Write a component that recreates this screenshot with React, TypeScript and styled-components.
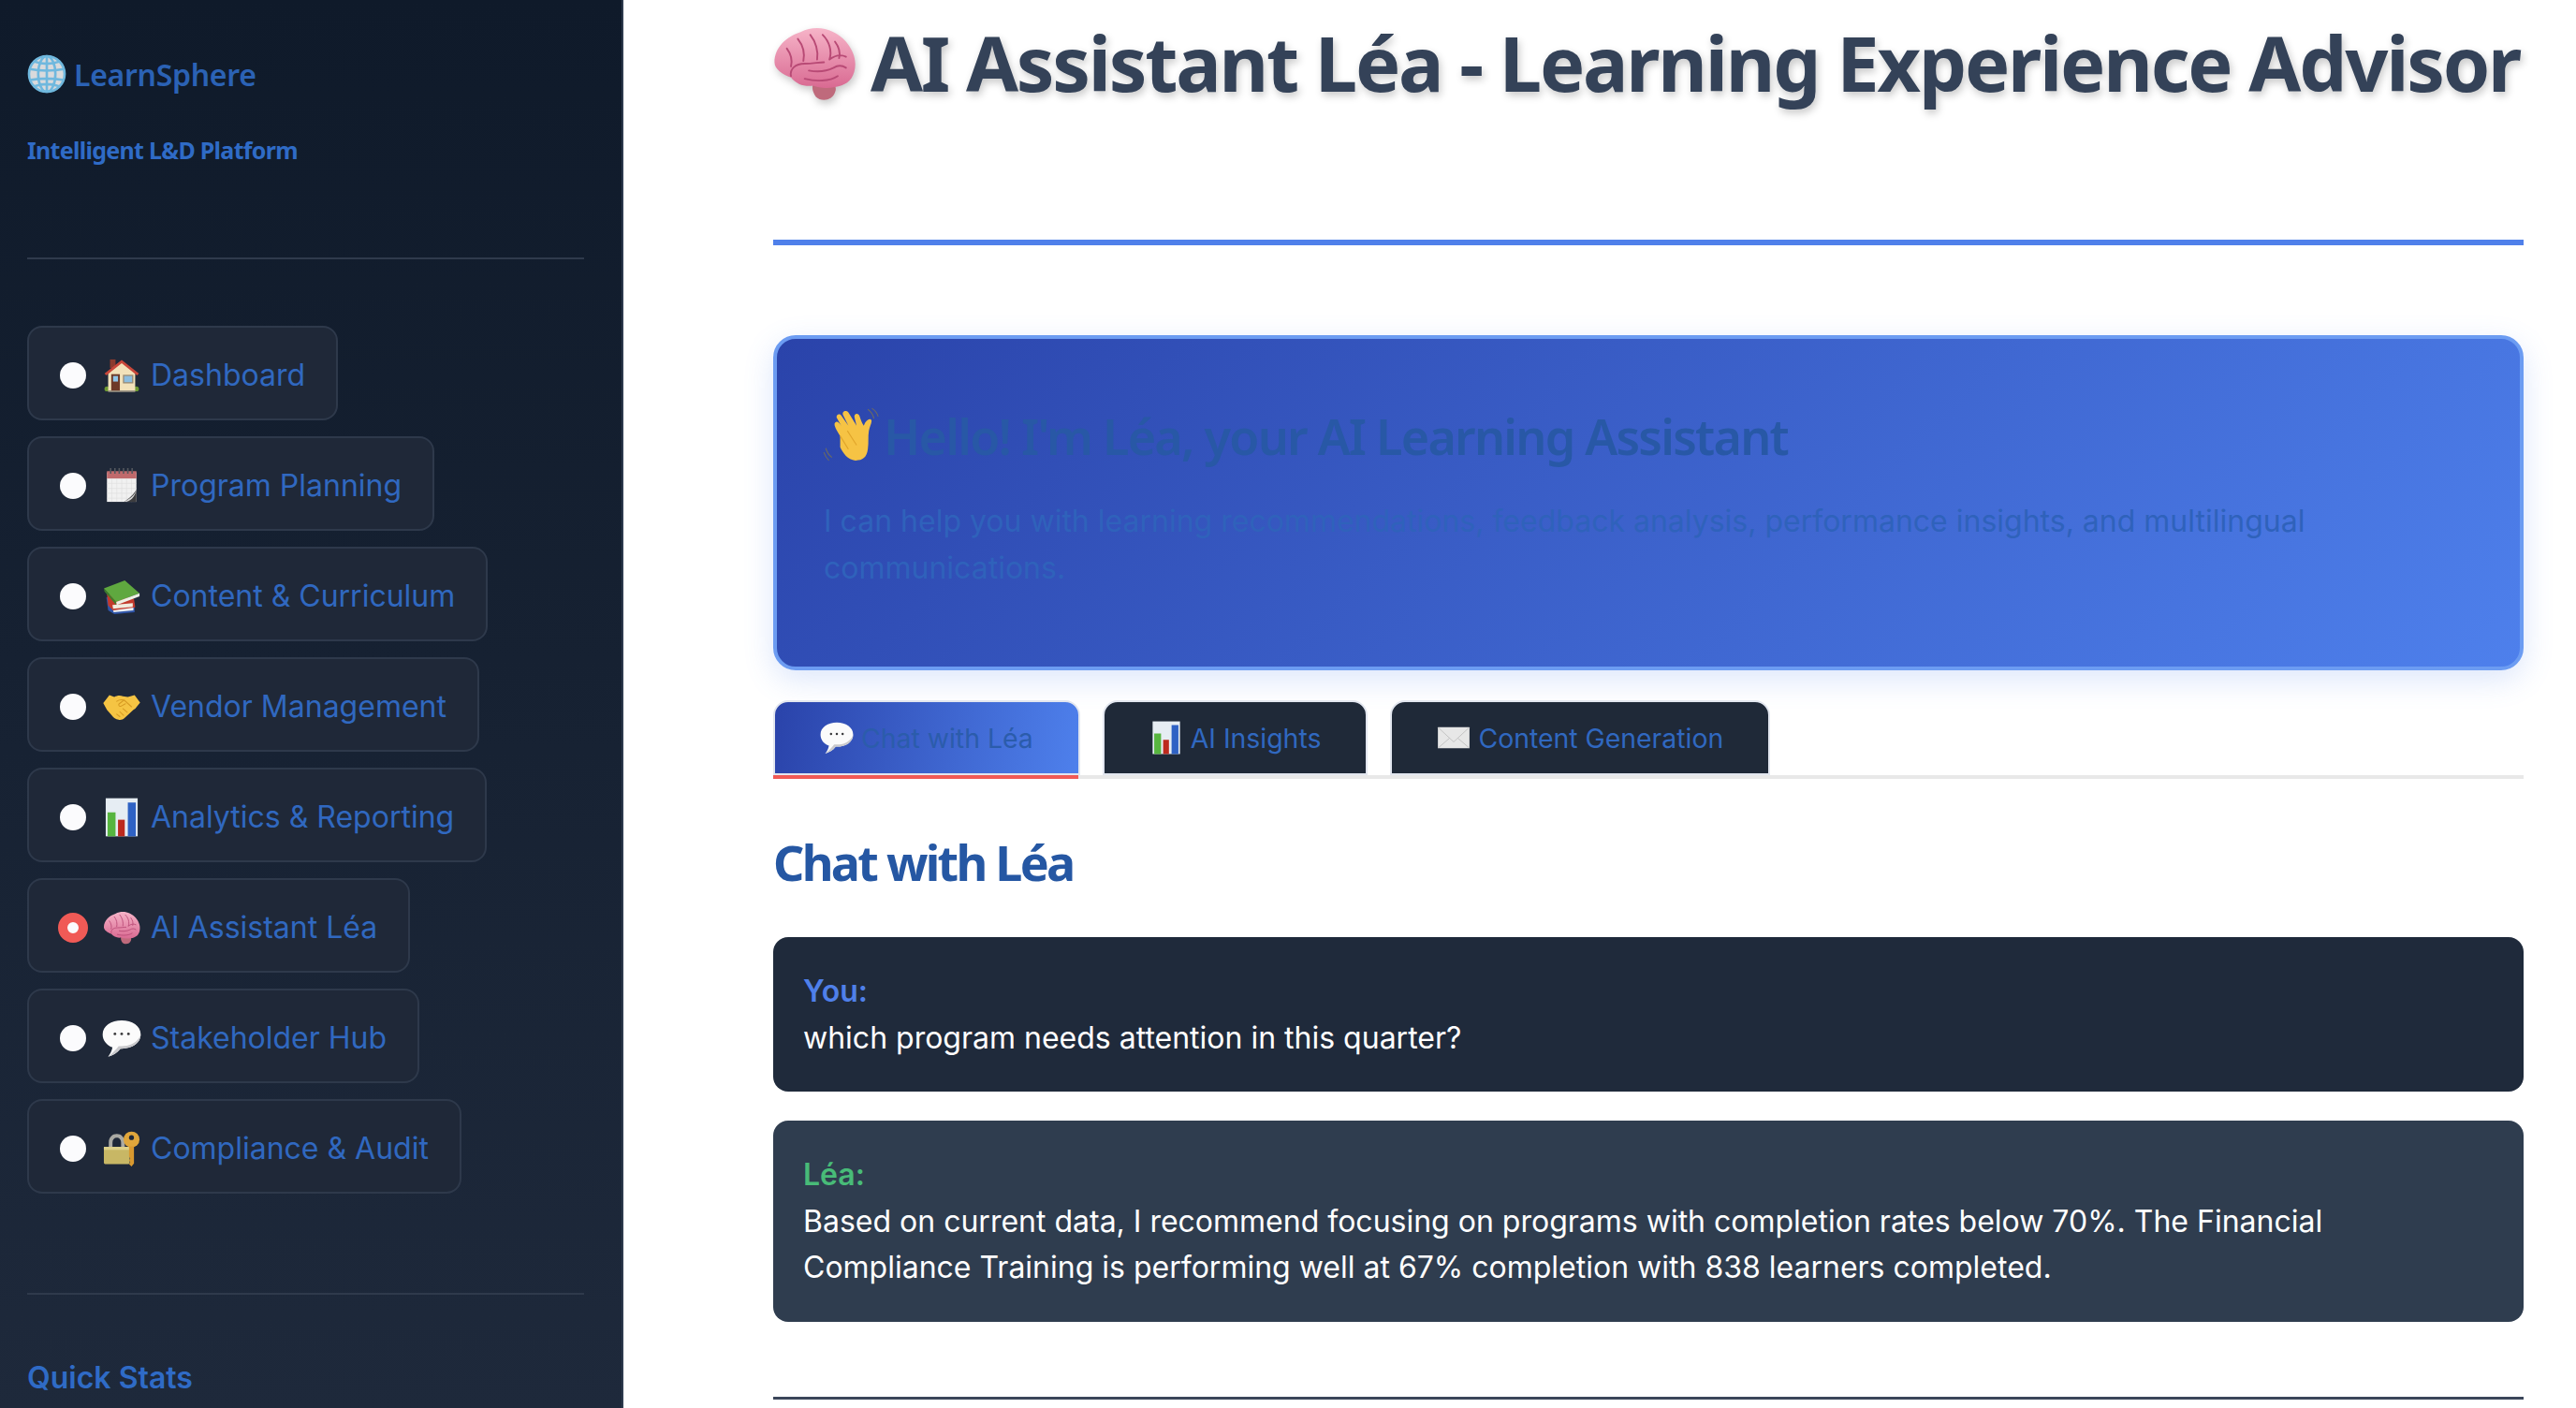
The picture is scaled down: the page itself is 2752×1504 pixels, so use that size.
import React from 'react';
import styled, { createGlobalStyle } from 'styled-components';

const GlobalStyle = createGlobalStyle`
  html, body {
    margin: 0;
    padding: 0;
    width: 2752px;
    height: 1504px;
    overflow: hidden;
    background: #ffffff;
    font-family: 'Inter', 'Liberation Sans', sans-serif;
  }
`;

const Page = styled.div`
  display: flex;
  width: 2752px;
  height: 1504px;
  overflow: hidden;
`;

const Sidebar = styled.aside`
  box-sizing: border-box;
  flex: 0 0 666px;
  height: 1504px;
  padding: 56px 40px 0 29px;
  background: linear-gradient(180deg, #0f1a2a 0%, #1e293b 100%);
  border-right: 2px solid #2d3a4d;
  overflow: hidden;
`;

const Brand = styled.div`
  display: flex;
  align-items: center;
  gap: 8px;
  height: 46px;
  font-family: 'Noto Sans', sans-serif;
  font-weight: 600;
  font-size: 32px;
  letter-spacing: -0.3px;
  color: #2b62b5;
`;

const BrandEmoji = styled.span`
  flex: none;
  display: flex;
  width: 42px;
  height: 42px;
`;

const Tagline = styled.div`
  margin-top: 40px;
  height: 36px;
  line-height: 36px;
  font-family: 'Noto Sans', sans-serif;
  font-weight: 700;
  font-size: 25px;
  letter-spacing: -0.7px;
  color: #2f6bc6;
`;

const SideRule = styled.hr<{ $top: number }>`
  margin: ${({ $top }) => $top}px 0 0;
  border: none;
  height: 2px;
  background: #2f3a4c;
`;

const Nav = styled.nav`
  display: flex;
  flex-direction: column;
  align-items: flex-start;
  gap: 17px;
  margin-top: 71px;
`;

const NavItem = styled.div`
  box-sizing: border-box;
  display: flex;
  align-items: center;
  height: 101px;
  padding: 4px 33px 0 33px;
  background: #1f2838;
  border: 2px solid #2e394b;
  border-radius: 16px;
  font-size: 32px;
  color: #3068c0;
  white-space: nowrap;
`;

const Radio = styled.span<{ $on?: boolean }>`
  box-sizing: border-box;
  flex: none;
  width: 28px;
  height: 28px;
  margin-right: 17px;
  border-radius: 50%;
  background: #fbfbfd;
  ${({ $on }) =>
    $on &&
    `
    width: 32px;
    height: 32px;
    margin: 0 15px 0 -2px;
    border: 10px solid #f05a56;
  `}
`;

const NavEmoji = styled.span`
  flex: none;
  display: flex;
  width: 42px;
  height: 42px;
  margin-right: 10px;
`;

const QuickStats = styled.div`
  margin-top: 67px;
  height: 44px;
  line-height: 44px;
  font-size: 32px;
  font-weight: 600;
  color: #2f6bc6;
`;

const Main = styled.main`
  flex: 1;
  min-width: 0;
  padding: 16px 56px 0 160px;
`;

const Title = styled.h1`
  display: flex;
  align-items: center;
  gap: 13px;
  height: 100px;
  margin: 0;
  font-family: 'Noto Sans', sans-serif;
  font-weight: 700;
  font-size: 81px;
  letter-spacing: -2.2px;
  color: #344258;
  text-shadow: 2px 4px 8px rgba(0, 0, 0, 0.22);
  white-space: nowrap;
`;

const TitleEmoji = styled.span`
  flex: none;
  display: flex;
  width: 94px;
  height: 94px;
  margin: 4px 0 0 -3px;
  filter: drop-shadow(2px 4px 4px rgba(0, 0, 0, 0.22));
`;

const TitleRule = styled.div`
  height: 6px;
  margin-top: 140px;
  background: #4f80ea;
`;

const Hero = styled.section`
  box-sizing: border-box;
  height: 358px;
  margin-top: 96px;
  padding: 73px 50px 0;
  background: linear-gradient(135deg, #2a43aa 0%, #4e80ec 100%);
  border: 4px solid #6c9cf2;
  border-radius: 24px;
  box-shadow: 0 10px 32px rgba(78, 128, 236, 0.2);
`;

const HeroHeading = styled.h2`
  display: flex;
  align-items: center;
  height: 60px;
  margin: 0;
  font-family: 'Noto Sans', sans-serif;
  font-weight: 600;
  font-size: 52px;
  letter-spacing: -1.75px;
  color: #2858a6;
  white-space: nowrap;
`;

const HeroEmoji = styled.span`
  flex: none;
  display: flex;
  width: 70px;
  height: 70px;
  margin: 10px -5px 0 -1px;
`;

const HeroText = styled.p`
  width: 1640px;
  margin: 37px 0 0;
  font-size: 32px;
  line-height: 49.5px;
  color: #2f62bb;
`;

const TabBar = styled.div`
  display: flex;
  gap: 24px;
  height: 80px;
  margin-top: 32px;
  border-bottom: 4px solid #e8e8e8;
`;

const Tab = styled.div<{ $active?: boolean }>`
  box-sizing: border-box;
  position: relative;
  display: flex;
  align-items: center;
  gap: 8px;
  height: 80px;
  padding: 0 48px;
  background: ${({ $active }) => ($active ? 'linear-gradient(100deg, #2a43aa 0%, #4e80ec 100%)' : '#1f2938')};
  border: 2px solid #e2e6ef;
  border-radius: 16px 16px 0 0;
  font-size: 28.4px;
  color: ${({ $active }) => ($active ? '#2b5cab' : '#3068c0')};
  white-space: nowrap;

  ${({ $active }) =>
    $active &&
    `
    &::after {
      content: '';
      position: absolute;
      left: -2px;
      right: 0;
      bottom: -6px;
      height: 4px;
      background: #f05a56;
    }
  `}
`;

const TabEmoji = styled.span`
  flex: none;
  display: flex;
  width: 36px;
  height: 36px;
`;

const SectionTitle = styled.h3`
  height: 60px;
  margin: 59px 0 0;
  line-height: 60px;
  font-family: 'Noto Sans', sans-serif;
  font-weight: 700;
  font-size: 52px;
  letter-spacing: -2.7px;
  color: #2557a3;
`;

const Messages = styled.div`
  display: flex;
  flex-direction: column;
  gap: 31px;
  margin-top: 50px;
`;

const Message = styled.div<{ $from: 'user' | 'bot' }>`
  padding: 33px 32px;
  background: ${({ $from }) => ($from === 'user' ? '#1f2a3b' : '#2f3d4f')};
  border-radius: 16px;
  font-size: 32px;
  line-height: 49.5px;
  color: #ffffff;
`;

const Speaker = styled.div<{ $from: 'user' | 'bot' }>`
  font-weight: 600;
  color: ${({ $from }) => ($from === 'user' ? '#4f80ea' : '#48bb78')};
`;

const BottomRule = styled.div`
  height: 3px;
  margin-top: 80px;
  background: #3b465a;
`;

const Svg = ({ children }: { children: React.ReactNode }) => (
  <svg viewBox="0 0 64 64" width="100%" height="100%" aria-hidden="true">
    {children}
  </svg>
);

const GlobeIcon = () => (
  <Svg>
    <circle cx="32" cy="32" r="29" fill="#d9dadc" />
    <g fill="none" stroke="#6fb8de" strokeWidth="4">
      <circle cx="32" cy="32" r="29" />
      <ellipse cx="32" cy="32" rx="14" ry="29" />
      <path d="M32 3v58M4 24c16 3 40 3 56 0M4 42c16-3 40-3 56 0M12 12c12 4 28 4 40 0M12 52c12-4 28-4 40 0" />
    </g>
  </Svg>
);

const HouseIcon = () => (
  <Svg>
    <rect x="13" y="6" width="9" height="14" fill="#8c3b2e" />
    <ellipse cx="8" cy="54" rx="4" ry="4" fill="#6f9a33" />
    <ellipse cx="56" cy="54" rx="4" ry="4" fill="#6f9a33" />
    <path d="M10 26L32 9l22 17v31H10z" fill="#f3e2ba" />
    <path d="M4 29L32 7l28 22-3 3L32 12 7 32z" fill="#c8473a" />
    <rect x="15" y="30" width="14" height="27" fill="#6e3a28" />
    <rect x="18" y="33" width="8" height="9" fill="#8fc4e8" />
    <rect x="34" y="31" width="17" height="14" fill="#9a8c74" />
    <rect x="36" y="33" width="13" height="10" fill="#8cbde0" />
    <rect x="10" y="57" width="44" height="2" fill="#a89e8c" />
  </Svg>
);

const CalendarIcon = () => (
  <Svg>
    <rect x="8" y="10" width="48" height="48" fill="#f1f1f1" />
    <rect x="8" y="8" width="48" height="12" fill="#c06a6c" />
    <path d="M16 20v38M24 20v38M32 20v38M40 20v38M48 20v38M8 28h48M8 36h48M8 44h48M8 52h48" stroke="#dddddd" strokeWidth="0.8" />
    <path d="M14 3v9M21 3v9M28 3v9M35 3v9M42 3v9M49 3v9" stroke="#55595f" strokeWidth="2.4" />
    <path d="M56 38C50 48 44 52 36 58h20z" fill="#3d3d3f" />
    <path d="M56 38c-3 10-10 14-20 20 10 0 18-8 20-20z" fill="#d9d9d9" />
  </Svg>
);

const BooksIcon = () => (
  <Svg>
    <path d="M7 34l8-3 38 12v15l-33 3-10-6z" fill="#2f55a8" />
    <path d="M17 50l34-3v8l-32 3z" fill="#eceff2" />
    <path d="M8 28l44 8 2 14-36 5-8-8z" fill="#c23a2c" />
    <path d="M17 46l33-3v6l-32 3z" fill="#f0ecdf" />
    <path d="M3 19L37 6l24 21-38 14z" fill="#5fa83f" />
    <path d="M3 19l20 22v5L4 24z" fill="#3f7f2c" />
    <path d="M23 41l38-14v5L24 46z" fill="#eef0e6" />
  </Svg>
);

const HandshakeIcon = () => (
  <Svg>
    <path d="M2 26L12 13l8 3c5-3 10-3 14-1l8 1 11-3 9 12-8 10-3 2-14 13c-3 3-7 4-10 3-5-1-8-3-11-7l-8-9z" fill="#f5c443" />
    <path d="M24 23c4-3 7-3 12-2l12 11M34 35l7 6M29 40l6 6M24 44l5 4M36 21l-8 6c-2 2 0 5 3 4l7-4" fill="none" stroke="#d69a22" strokeWidth="1.6" strokeLinecap="round" />
  </Svg>
);

const ChartIcon = () => (
  <Svg>
    <rect x="6" y="1" width="52" height="62" fill="#e6edf3" />
    <rect x="9" y="24" width="13" height="39" fill="#57b53f" />
    <rect x="26" y="36" width="11" height="27" fill="#bd2a1e" />
    <rect x="42" y="8" width="13" height="55" fill="#2f62c4" />
  </Svg>
);

const BubbleIcon = () => (
  <Svg>
    <path d="M32 3C15 3 1 12 1 26c0 10 7 18 16 21-1 6-4 11-7 15 7-2 15-6 20-13h2c17 0 31-9 31-23S49 3 32 3z" fill="#fbfbfb" />
    <path d="M10 62c7-2 15-6 20-13h2c17 0 31-9 31-23 0 0-5 19-31 19h-5c-4 5-10 12-17 17z" fill="#c9c9cc" />
    <g fill="#3a3a3c">
      <circle cx="21" cy="25" r="2.2" />
      <circle cx="32" cy="25" r="2.2" />
      <circle cx="43" cy="25" r="2.2" />
    </g>
  </Svg>
);

const LockIcon = () => (
  <Svg>
    <path d="M11 30V22c0-9 6-14 13-14s13 5 13 14v8h-6v-8c0-5-3-8-7-8s-7 3-7 8v8z" fill="#a9a9a3" />
    <rect x="3" y="29" width="42" height="28" rx="2" fill="#c8b765" />
    <rect x="3" y="29" width="42" height="5" fill="#ddd08a" />
    <circle cx="48" cy="17" r="13" fill="#e0a63b" />
    <circle cx="48" cy="14" r="4" fill="#1f2838" />
    <path d="M44 28h8v28l-4 5-4-4 2-3-2-3 2-3-2-3z" fill="#d9992f" />
  </Svg>
);

const BrainIcon = () => (
  <Svg>
    <defs>
      <linearGradient id="brainFill" x1="0" y1="0" x2="0" y2="1">
        <stop offset="0" stopColor="#f6b4c8" />
        <stop offset="1" stopColor="#d96a92" />
      </linearGradient>
    </defs>
    <path d="M38 46c8 0 11 2 9 7-2 6-10 7-14 3-2-3-3-6-2-9z" fill="#bf6a7c" />
    <path d="M3 31C3 20 12 12 22 9 34 3 47 7 55 16c6 7 8 15 6 22-2 7-7 10-14 11-5 1-11 1-16-1-6 1-12-1-16-6-6-2-12-6-12-11z" fill="url(#brainFill)" />
    <path d="M12 21c3 4 4 9 3 13M20 14c4 5 5 11 4 16M29 11c4 5 6 12 5 18M38 11c5 5 7 12 5 18M47 16c3 4 4 8 3 12M15 41c-1-5 3-9 10-9 6 0 10-1 14-1M28 37c5 1 12 1 18-2 3-2 6-2 9 0M25 43c8 2 18 2 24-2M43 29c4-3 8-4 12-2" fill="none" stroke="#b84a75" strokeWidth="1.3" strokeLinecap="round" />
  </Svg>
);

const WaveIcon = () => (
  <Svg>
    <g fill="none" stroke="#6b6a62" strokeWidth="1">
      <path d="M44 2c3 2 5 5 6 9M48 1c3 2 5 4 6 8" />
      <path d="M3 40c1 4 3 7 6 9M1 44c1 3 3 6 5 8" />
    </g>
    <path d="M17 28c-3-5-7-11-5-13 2-2 4 0 6 3l-4-7c-2-3 2-6 4-3l7 10-5-10c-2-4 3-6 5-3l8 13-2-8c-1-4 4-5 5-1 1 3 2 6 4 9 2-5 5-7 7-6 2 1-1 6-2 11-1 6 0 11-1 18-1 8-5 11-12 11-8-1-12-7-15-13z" fill="#f6c344" />
    <path d="M24 23l9 14M17 28l8 13" stroke="#e0a52a" strokeWidth="1" fill="none" />
  </Svg>
);

const EnvelopeIcon = () => (
  <Svg>
    <rect x="2" y="12" width="60" height="40" rx="1" fill="#e7e7e7" />
    <path d="M3 13l29 27 29-27M3 51l21-18M61 51L40 33" fill="none" stroke="#bdbdbd" strokeWidth="1.5" />
  </Svg>
);

const navItems = [
  { label: 'Dashboard', icon: <HouseIcon /> },
  { label: 'Program Planning', icon: <CalendarIcon /> },
  { label: 'Content & Curriculum', icon: <BooksIcon /> },
  { label: 'Vendor Management', icon: <HandshakeIcon /> },
  { label: 'Analytics & Reporting', icon: <ChartIcon /> },
  { label: 'AI Assistant Léa', icon: <BrainIcon />, active: true },
  { label: 'Stakeholder Hub', icon: <BubbleIcon /> },
  { label: 'Compliance & Audit', icon: <LockIcon /> },
];

const App: React.FC = () => {
  return (
    <Page>
      <GlobalStyle />
      <Sidebar>
        <Brand>
          <BrandEmoji>
            <GlobeIcon />
          </BrandEmoji>
          LearnSphere
        </Brand>
        <Tagline>Intelligent L&amp;D Platform</Tagline>
        <SideRule $top={97} />
        <Nav>
          {navItems.map((item) => (
            <NavItem key={item.label}>
              <Radio $on={item.active} />
              <NavEmoji>{item.icon}</NavEmoji>
              {item.label}
            </NavItem>
          ))}
        </Nav>
        <SideRule $top={106} />
        <QuickStats>Quick Stats</QuickStats>
      </Sidebar>

      <Main>
        <Title>
          <TitleEmoji>
            <BrainIcon />
          </TitleEmoji>
          AI Assistant Léa - Learning Experience Advisor
        </Title>
        <TitleRule />

        <Hero>
          <HeroHeading>
            <HeroEmoji>
              <WaveIcon />
            </HeroEmoji>
            Hello! I'm Léa, your AI Learning Assistant
          </HeroHeading>
          <HeroText>
            I can help you with learning recommendations, feedback analysis, performance insights, and multilingual
            communications.
          </HeroText>
        </Hero>

        <TabBar>
          <Tab $active>
            <TabEmoji>
              <BubbleIcon />
            </TabEmoji>
            Chat with Léa
          </Tab>
          <Tab>
            <TabEmoji>
              <ChartIcon />
            </TabEmoji>
            AI Insights
          </Tab>
          <Tab>
            <TabEmoji>
              <EnvelopeIcon />
            </TabEmoji>
            Content Generation
          </Tab>
        </TabBar>

        <SectionTitle>Chat with Léa</SectionTitle>

        <Messages>
          <Message $from="user">
            <Speaker $from="user">You:</Speaker>
            which program needs attention in this quarter?
          </Message>
          <Message $from="bot">
            <Speaker $from="bot">Léa:</Speaker>
            Based on current data, I recommend focusing on programs with completion rates below 70%. The Financial
            Compliance Training is performing well at 67% completion with 838 learners completed.
          </Message>
        </Messages>

        <BottomRule />
      </Main>
    </Page>
  );
};

export default App;
